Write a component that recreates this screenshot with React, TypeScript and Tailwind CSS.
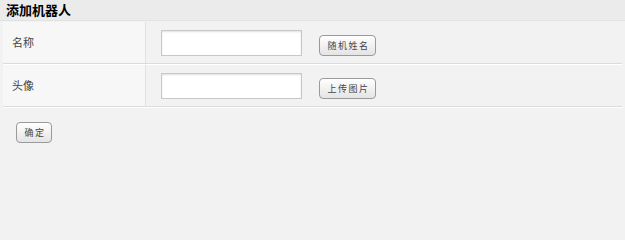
import React from 'react';

const font = "font-['Microsoft_YaHei','Noto_Sans_CJK_SC',sans-serif]";

function Btn({ children }: { children: React.ReactNode }) {
  return (
    <button className="h-[21px] w-[57px] pl-[2px] rounded-[4px] border border-[#9a9a9a] bg-gradient-to-b from-[#ffffff] to-[#e4e4e4] text-[9px] leading-none tracking-[1.5px] text-[#444] shadow-[inset_0_1px_0_#fff]">
      {children}
    </button>
  );
}

function Row({ label, action }: { label: string; action: string }) {
  return (
    <div className="flex h-[42px] border-b border-[#dcdcdc] shadow-[0_1px_0_#ffffff]">
      <div className="w-[143px] bg-[#f7f7f7] border-r border-[#e2e2e2] shadow-[1px_0_0_#ffffff] pl-[9px] flex items-center text-[11px] text-[#444]">
        {label}
      </div>
      <div className="flex-1 flex items-center pl-[15px] bg-[#f2f2f2]">
        <input className="w-[141px] h-[26px] border border-[#c8c8c8] bg-white shadow-[inset_0_1px_2px_#e0e0e0] outline-none" />
        <div className="ml-[17px]">
          <Btn>{action}</Btn>
        </div>
      </div>
    </div>
  );
}

export default function App() {
  return (
    <div className={`w-full min-h-screen bg-[#f2f2f2] ${font}`}>
      <div className="h-[21px] bg-[#ebebeb] border-b border-[#e2e2e2] pl-[6px] text-[13px] font-bold leading-[20px] text-black">
        添加机器人
      </div>
      <div className="px-[3px] pt-[1px]">
        <Row label="名称" action="随机姓名" />
        <div className="h-[1px]" />
        <Row label="头像" action="上传图片" />
      </div>
      <div className="pl-[16px] pt-[10px]">
        <button className="h-[21px] w-[36px] pl-[2px] rounded-[4px] border border-[#9a9a9a] bg-gradient-to-b from-[#ffffff] to-[#e4e4e4] text-[9px] leading-none tracking-[1.5px] text-[#444]">
          确定
        </button>
      </div>
    </div>
  );
}
